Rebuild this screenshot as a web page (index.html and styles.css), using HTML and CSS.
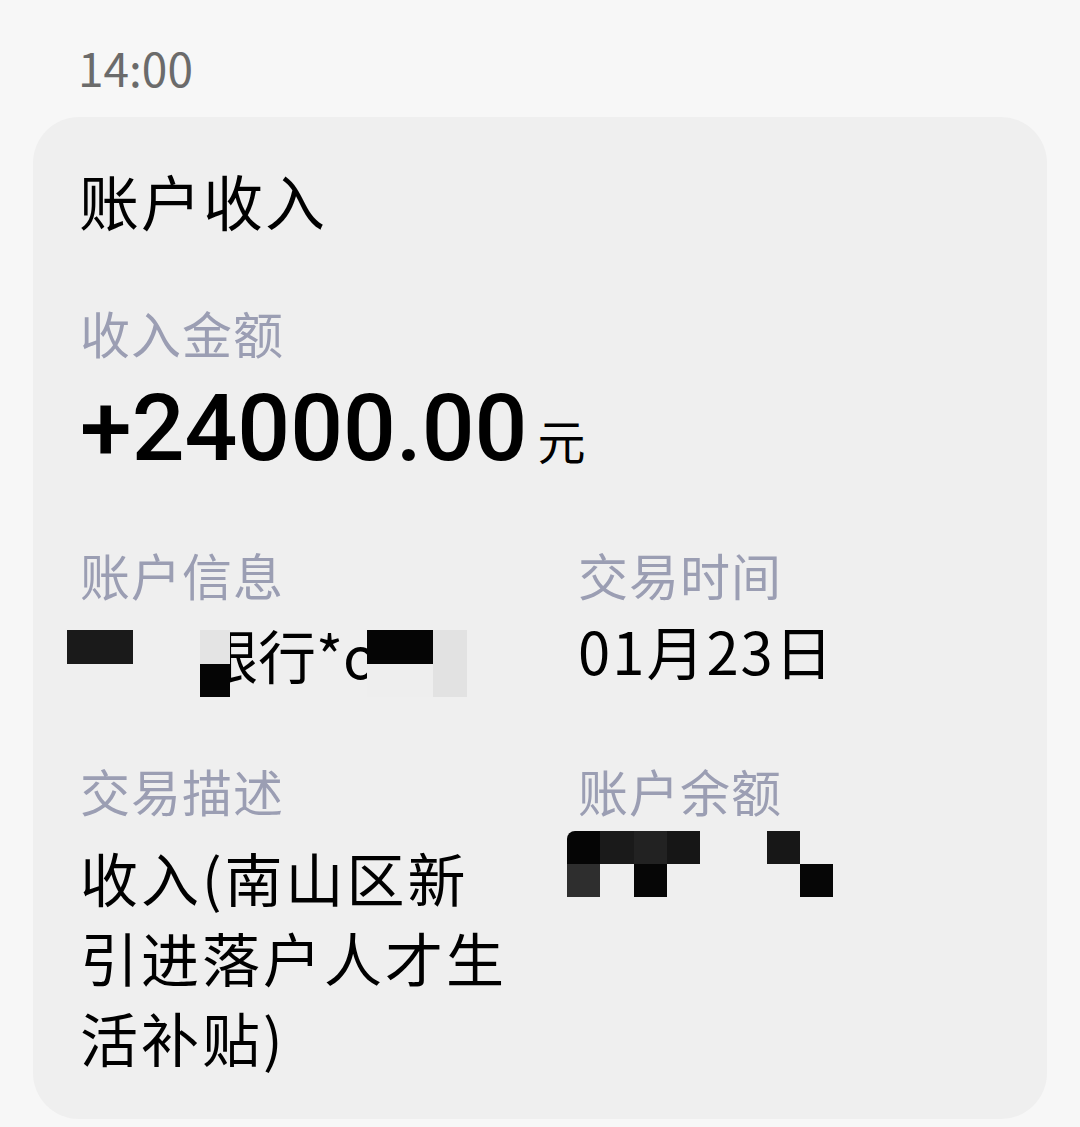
FILE: index.html
```html
<!DOCTYPE html>
<html lang="zh-CN">
<head>
<meta charset="utf-8">
<title>账户收入</title>
<link rel="stylesheet" href="styles.css">
</head>
<body>
<div class="page">
  <div class="time">14:00</div>
  <div class="card">
    <div class="title">账户收入</div>
    <div class="label label-amount">收入金额</div>
    <div class="amount"><span class="num">+24000.00</span><span class="unit">元</span></div>
    <div class="grid">
      <div class="cell">
        <div class="label">账户信息</div>
        <div class="value bank">
          <span class="bank-text">银行*o</span>
          <span class="px px-a"></span>
          <span class="px px-b"></span>
          <span class="px px-c"></span>
          <span class="px px-d"></span>
          <span class="px px-e"></span>
          <span class="px px-f"></span>
        </div>
      </div>
      <div class="cell">
        <div class="label">交易时间</div>
        <div class="value">01月23日</div>
      </div>
      <div class="cell cell-low">
        <div class="label">交易描述</div>
        <div class="desc">收入(南山区新<br>引进落户人才生<br>活补贴)</div>
      </div>
      <div class="cell cell-low">
        <div class="label">账户余额</div>
        <div class="mosaic">
          <span class="m m1"></span><span class="m m2"></span><span class="m m3"></span><span class="m m4"></span><span class="m"></span><span class="m"></span><span class="m m5"></span><span class="m"></span>
          <span class="m m6"></span><span class="m"></span><span class="m m7"></span><span class="m"></span><span class="m"></span><span class="m"></span><span class="m"></span><span class="m m8"></span>
        </div>
      </div>
    </div>
  </div>
</div>
</body>
</html>
```

FILE: styles.css
```css
html, body {
  margin: 0;
  padding: 0;
  background: #f7f7f7;
}
body {
  font-family: "Noto Sans CJK SC", "Noto Sans", sans-serif;
  color: #000;
}
.page {
  padding: 37px 33px 0 33px;
}
.time {
  margin-left: 45px;
  font-size: 46px;
  line-height: 60px;
  color: #6b6b6b;
}
.card {
  margin-top: 20px;
  background: #efefef;
  border-radius: 46px;
  padding: 43px 47px 42px 47px;
  height: 917px;
}
.title {
  font-size: 60px;
  line-height: 80px;
  letter-spacing: 2px;
  margin-left: -1px;
}
.label {
  font-size: 50px;
  line-height: 64px;
  letter-spacing: 1px;
  color: #9b9eb3;
}
.label-amount {
  margin-top: 60px;
}
.amount {
  margin-top: 15px;
  height: 100px;
  display: flex;
  align-items: baseline;
}
.num {
  font-family: Roboto, "Noto Sans", sans-serif;
  font-size: 93px;
  line-height: 100px;
  font-weight: 500;
  letter-spacing: 0;
}
.unit {
  font-size: 48px;
  line-height: 100px;
  margin-left: 10px;
}
.grid {
  display: grid;
  grid-template-columns: 498px 1fr;
  margin-top: 63px;
}
.cell-low {
  margin-top: 73px;
}
.value {
  margin-top: 9px;
  font-size: 58px;
  line-height: 70px;
  letter-spacing: 2px;
}
.bank {
  position: relative;
  height: 70px;
}
.bank-text {
  display: block;
  padding-left: 120px;
  padding-top: 9px;
  letter-spacing: 0;
  line-height: 61px;
}
.px {
  position: absolute;
  display: block;
}
.px-a { left: -13px; top: 15px; width: 66px; height: 34px; background: #1a1a1a; }
.px-b { left: 120px; top: 15px; width: 30px; height: 34px; background: #e4e4e4; }
.px-c { left: 120px; top: 49px; width: 30px; height: 33px; background: #050505; }
.px-d { left: 287px; top: 15px; width: 66px; height: 34px; background: #050505; }
.px-e { left: 287px; top: 49px; width: 66px; height: 33px; background: #eeeeee; }
.px-f { left: 353px; top: 15px; width: 34px; height: 67px; background: #e2e2e2; }
.desc {
  margin-top: 15px;
  font-size: 58px;
  line-height: 80px;
  letter-spacing: 3px;
}
.mosaic {
  display: grid;
  grid-template-columns: repeat(8, 33.3px);
  grid-auto-rows: 33px;
  margin-top: 9px;
  margin-left: -11px;
}
.m { display: block; }
.m1 { background: #050505; border-top-left-radius: 8px; }
.m2 { background: #1a1a1a; }
.m3 { background: #222222; }
.m4 { background: #161616; }
.m5 { background: #171717; }
.m6 { background: #2e2e2e; }
.m7 { background: #060606; }
.m8 { background: #060606; }
```
